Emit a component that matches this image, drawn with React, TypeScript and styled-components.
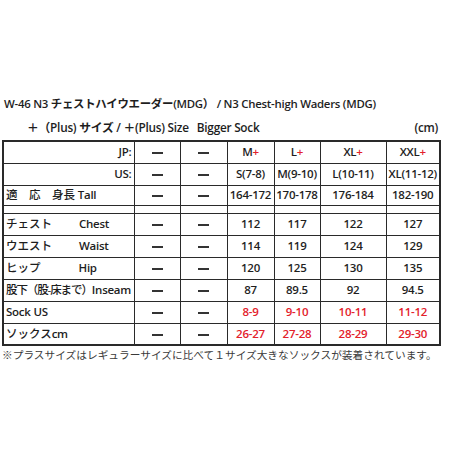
import React from 'react';
import styled, { createGlobalStyle } from 'styled-components';

const GlobalStyle = createGlobalStyle`
  html, body {
    margin: 0;
    padding: 0;
    background: #fff;
  }
  body {
    font-family: "Open Sans", "Noto Sans CJK JP", sans-serif;
    color: #1e1e1e;
  }
`;

const StyledPage = styled.div`
  width: 460px;
  height: 460px;
  padding: 96px 0 0 2px;
  box-sizing: border-box;
`;

const StyledTitle = styled.div`
  font-size: 11.4px;
  line-height: 16px;
  font-weight: 600;
  letter-spacing: -0.25px;
  padding-left: 2px;
  white-space: nowrap;
`;

const StyledSubRow = styled.div`
  display: flex;
  justify-content: space-between;
  align-items: center;
  margin-top: 7px;
  width: 436px;
  font-size: 11.8px;
  line-height: 16px;
  font-weight: 600;
  letter-spacing: -0.25px;
  white-space: nowrap;
`;

const StyledSubText = styled.span`
  padding-left: 25px;
`;

const StyledGap = styled.span`
  display: inline-block;
  width: 8px;
`;

const StyledTable = styled.table`
  margin-top: 5px;
  border-collapse: collapse;
  table-layout: fixed;
  width: 437px;
  border: 2px solid #2a2a2a;
  font-size: 11.5px;
  font-weight: 600;
  letter-spacing: -0.25px;
`;

const StyledRow = styled.tr<{ $h: number }>`
  height: ${(p) => p.$h}px;
`;

const StyledLabel = styled.td<{ $right?: boolean }>`
  border: 1.5px solid #2a2a2a;
  padding: 0 2px;
  text-align: ${(p) => (p.$right ? 'right' : 'left')};
  white-space: nowrap;
  overflow: hidden;
  line-height: 14px;
`;

const StyledCell = styled.td<{ $red?: boolean }>`
  border: 1.5px solid #2a2a2a;
  padding: 0;
  text-align: center;
  white-space: nowrap;
  line-height: 14px;
  color: ${(p) => (p.$red ? '#e3202a' : '#1e1e1e')};
`;

const StyledPlus = styled.span`
  color: #e3202a;
`;

const StyledDash = styled.span`
  display: inline-block;
  width: 11px;
  height: 2px;
  background: #333;
  vertical-align: middle;
`;

const StyledJa = styled.span<{ $tight?: boolean }>`
  font-weight: 500;
  letter-spacing: ${(p) => (p.$tight ? '-1.1px' : '0')};
`;

const StyledEn = styled.span<{ $at: number }>`
  display: inline-block;
  margin-left: ${(p) => p.$at}px;
`;

const StyledFoot = styled.div`
  margin-top: 2px;
  font-size: 10.7px;
  line-height: 14px;
  color: #3a3a3a;
  white-space: nowrap;
`;

type Row = {
  label: React.ReactNode;
  right?: boolean;
  values: string[];
  red?: boolean;
  h?: number;
};

const headRows: Row[] = [
  { label: 'US:', right: true, values: ['S(7-8)', 'M(9-10)', 'L(10-11)', 'XL(11-12)'] },
  {
    label: (
      <>
        <StyledJa>適　応　身長</StyledJa>  Tall
      </>
    ),
    values: ['164-172', '170-178', '176-184', '182-190'],
    h: 20,
  },
];

const bodyRows: Row[] = [
  {
    label: (
      <>
        <StyledJa>チェスト</StyledJa>
        <StyledEn $at={27}>Chest</StyledEn>
      </>
    ),
    values: ['112', '117', '122', '127'],
  },
  {
    label: (
      <>
        <StyledJa>ウエスト</StyledJa>
        <StyledEn $at={27}>Waist</StyledEn>
      </>
    ),
    values: ['114', '119', '124', '129'],
  },
  {
    label: (
      <>
        <StyledJa>ヒップ</StyledJa>
        <StyledEn $at={38}>Hip</StyledEn>
      </>
    ),
    values: ['120', '125', '130', '135'],
  },
  {
    label: (
      <>
        <StyledJa $tight>股下（股-床まで）</StyledJa>Inseam
      </>
    ),
    values: ['87', '89.5', '92', '94.5'],
  },
  { label: 'Sock  US', values: ['8-9', '9-10', '10-11', '11-12'], red: true },
  {
    label: (
      <>
        <StyledJa>ソックス</StyledJa>cm
      </>
    ),
    values: ['26-27', '27-28', '28-29', '29-30'],
    red: true,
  },
];

const widths = [131, 46, 47, 47, 46, 66, 54];

function DataRow({ row }: { row: Row }): JSX.Element {
  return (
    <StyledRow $h={row.h ?? 22}>
      <StyledLabel $right={row.right}>{row.label}</StyledLabel>
      <StyledCell>
        <StyledDash />
      </StyledCell>
      <StyledCell>
        <StyledDash />
      </StyledCell>
      {row.values.map((v) => (
        <StyledCell key={v} $red={row.red}>
          {v}
        </StyledCell>
      ))}
    </StyledRow>
  );
}

export default function App(): JSX.Element {
  return (
    <>
      <GlobalStyle />
      <StyledPage>
        <StyledTitle>W-46 N3 チェストハイウエーダー(MDG） / N3 Chest-high Waders (MDG)</StyledTitle>
        <StyledSubRow>
          <StyledSubText>
            ＋（Plus) サイズ / ＋(Plus) Size
            <StyledGap />
            Bigger Sock
          </StyledSubText>
          <span>(cm)</span>
        </StyledSubRow>
        <StyledTable>
          <colgroup>
            {widths.map((w, i) => (
              <col key={i} style={{ width: w }} />
            ))}
          </colgroup>
          <tbody>
            <StyledRow $h={22}>
              <StyledLabel $right>JP:</StyledLabel>
              <StyledCell>
                <StyledDash />
              </StyledCell>
              <StyledCell>
                <StyledDash />
              </StyledCell>
              {['M', 'L', 'XL', 'XXL'].map((s) => (
                <StyledCell key={s}>
                  {s}
                  <StyledPlus>+</StyledPlus>
                </StyledCell>
              ))}
            </StyledRow>
            {headRows.map((r, i) => (
              <DataRow key={i} row={r} />
            ))}
            <StyledRow $h={8}>
              {widths.map((_, i) => (
                <StyledCell key={i} />
              ))}
            </StyledRow>
            {bodyRows.map((r, i) => (
              <DataRow key={i} row={r} />
            ))}
          </tbody>
        </StyledTable>
        <StyledFoot>※プラスサイズはレギュラーサイズに比べて１サイズ大きなソックスが装着されています。</StyledFoot>
      </StyledPage>
    </>
  );
}
